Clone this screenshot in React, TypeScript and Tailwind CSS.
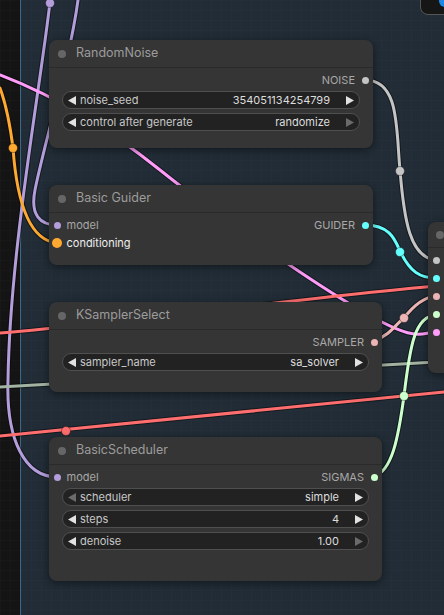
import React from "react";

type Dir = "l" | "r";

function Arrow({ dir, dim }: { dir: Dir; dim?: boolean }) {
  return (
    <svg width="8" height="9" viewBox="0 0 8 9" className="shrink-0">
      <polygon
        points={dir === "l" ? "8,0 8,9 0,4.5" : "0,0 0,9 8,4.5"}
        fill={dim ? "#6b6b6b" : "#e2e2e2"}
      />
    </svg>
  );
}

function Widget({
  label,
  value,
  dimLeft,
  dimRight,
}: {
  label: string;
  value: string;
  dimLeft?: boolean;
  dimRight?: boolean;
}) {
  return (
    <div className="mx-[13px] flex h-[18px] items-center rounded-full border border-[#4f4f4f] bg-[#222222] px-[5px] text-[11px]">
      <Arrow dir="l" dim={dimLeft} />
      <span className="ml-[4px] text-[#c8c8c8]">{label}</span>
      <span className="ml-auto mr-[16px] text-[#dddddd]">{value}</span>
      <Arrow dir="r" dim={dimRight} />
    </div>
  );
}

function InSlot({ label, dot, bright }: { label: string; dot: string; bright?: boolean }) {
  return (
    <div className="flex h-[18px] items-center">
      <span className="flex w-4 justify-center">
        <span className={`rounded-full ${dot}`} />
      </span>
      <span className={`ml-[1.5px] text-[11px] ${bright ? "text-[#eeeeee]" : "text-[#a8a8a8]"}`}>{label}</span>
    </div>
  );
}

function OutSlot({ label, dot }: { label: string; dot: string }) {
  return (
    <div className="ml-auto flex h-[18px] items-center">
      <span className="mr-[2px] text-[11px] text-[#a8a8a8]">{label}</span>
      <span className="flex w-4 justify-center">
        <span className={`rounded-full ${dot}`} />
      </span>
    </div>
  );
}

function Node({ pos, title, children }: { pos: string; title: string; children: React.ReactNode }) {
  return (
    <div className={`absolute ${pos} flex flex-col rounded-lg bg-[#353535] shadow-[0_2px_8px_rgba(0,0,0,0.45)]`}>
      <div className="flex h-[28px] shrink-0 items-center border-b border-[#2a2a2a] pl-[9px]">
        <span className="h-[8px] w-[8px] rounded-full bg-[#666666]" />
        <span className="ml-[10px] text-[12.5px] text-[#9c9c9c]">{title}</span>
      </div>
      <div className="flex flex-col pt-[3px]">{children}</div>
    </div>
  );
}

const wires: { d: string; color: string }[] = [
  { d: "M50,2 C40,90 10,250 8,380 C6,440 25,477 57,477", color: "#B39DDB" },
  { d: "M78,0 C70,60 45,140 35,190 C30,215 40,225 57,225", color: "#B39DDB" },
  { d: "M0,88 C8,110 12,140 13,148 C16,190 25,240 57,243", color: "#FFA931" },
  { d: "M0,75 C60,98 110,130 160,170 S300,275 360,310 S420,332 436,332", color: "#FF9CF9" },
  { d: "M0,333 C150,320 300,298 436,286", color: "#FF6E6E" },
  { d: "M0,436 L444,392", color: "#FF6E6E" },
  { d: "M0,387 L436,362", color: "#A3B3A3" },
  { d: "M365,80 C400,80 396,130 400,170 C404,220 410,258 436,260", color: "#C4C4C4" },
  { d: "M365,225 C390,225 395,240 400,251 C410,272 420,278 436,278", color: "#66FFFF" },
  { d: "M374,341 C390,335 395,325 404,318 C414,305 425,297 436,296", color: "#ECB4B4" },
  { d: "M374,477 C392,470 398,440 404,396 C410,345 415,316 436,315", color: "#CDFFCD" },
];

const dots: { x: number; y: number; color: string }[] = [
  { x: 50, y: 3, color: "#B39DDB" },
  { x: 13, y: 148, color: "#FFA931" },
  { x: 400, y: 171, color: "#C4C4C4" },
  { x: 400, y: 252, color: "#66FFFF" },
  { x: 404, y: 318, color: "#ECB4B4" },
  { x: 404, y: 396, color: "#CDFFCD" },
  { x: 66, y: 431, color: "#FF6E6E" },
];

export default function App() {
  return (
    <div className="relative flex h-[615px] w-[444px] overflow-hidden font-['Inter','Noto_Sans',sans-serif]">
      <div className="h-full w-[21px] shrink-0 border-r border-[#3d6587] bg-[#141414] bg-[linear-gradient(to_right,#181818_1px,transparent_1px),linear-gradient(to_bottom,#181818_1px,transparent_1px)] bg-size-[10px_10px]" />
      <div className="h-full flex-1 bg-[#212c36] bg-[linear-gradient(to_right,#242f39_1px,transparent_1px),linear-gradient(to_bottom,#242f39_1px,transparent_1px)] bg-size-[10px_10px]" />

      <svg className="absolute inset-0" width="444" height="615" viewBox="0 0 444 615" fill="none">
        {wires.map((w, i) => (
          <path key={`o${i}`} d={w.d} stroke="#000000" strokeOpacity="0.45" strokeWidth="5" strokeLinecap="round" />
        ))}
        {wires.map((w, i) => (
          <path key={`w${i}`} d={w.d} stroke={w.color} strokeWidth="3" strokeLinecap="round" />
        ))}
        {dots.map((p, i) => (
          <circle key={i} cx={p.x} cy={p.y} r="4.5" fill={p.color} stroke="#000000" strokeOpacity="0.35" strokeWidth="1" />
        ))}
      </svg>

      <Node pos="left-[49px] top-[40px] w-[324px] h-[108px]" title="RandomNoise">
        <OutSlot label="NOISE" dot="h-[7px] w-[7px] bg-[#c4c4c4]" />
        <div className="mt-[2px] flex flex-col gap-[4px]">
          <Widget label="noise_seed" value="354051134254799" />
          <Widget label="control after generate" value="randomize" dimRight />
        </div>
      </Node>

      <Node pos="left-[49px] top-[185px] w-[324px] h-[80px]" title="Basic Guider">
        <div className="flex">
          <InSlot label="model" dot="h-[7px] w-[7px] bg-[#B39DDB]" />
          <OutSlot label="GUIDER" dot="h-[7px] w-[7px] bg-[#66FFFF]" />
        </div>
        <InSlot label="conditioning" dot="h-[10px] w-[10px] bg-[#FFA931]" bright />
      </Node>

      <Node pos="left-[49px] top-[302px] w-[333px] h-[90px]" title="KSamplerSelect">
        <OutSlot label="SAMPLER" dot="h-[7px] w-[7px] bg-[#ECB4B4]" />
        <div className="mt-[2px] flex flex-col gap-[4px]">
          <Widget label="sampler_name" value="sa_solver" />
        </div>
      </Node>

      <Node pos="left-[49px] top-[437px] w-[333px] h-[144px]" title="BasicScheduler">
        <div className="flex">
          <InSlot label="model" dot="h-[7px] w-[7px] bg-[#B39DDB]" />
          <OutSlot label="SIGMAS" dot="h-[7px] w-[7px] bg-[#CDFFCD]" />
        </div>
        <div className="mt-[2px] flex flex-col gap-[4px]">
          <Widget label="scheduler" value="simple" dimLeft />
          <Widget label="steps" value="4" />
          <Widget label="denoise" value="1.00" dimRight />
        </div>
      </Node>

      <div className="absolute left-[428px] top-[222px] flex h-[151px] w-[40px] flex-col rounded-l-lg bg-[#353535] shadow-[0_2px_8px_rgba(0,0,0,0.45)]">
        <div className="flex h-[26px] shrink-0 items-center border-b border-[#2a2a2a] pl-[8px]">
          <span className="h-[8px] w-[8px] rounded-full bg-[#666666]" />
        </div>
        <div className="flex flex-col pt-[3px]">
          <InSlot label="" dot="h-[7px] w-[7px] bg-[#c4c4c4]" />
          <InSlot label="" dot="h-[7px] w-[7px] bg-[#66FFFF]" />
          <InSlot label="" dot="h-[7px] w-[7px] bg-[#ECB4B4]" />
          <InSlot label="" dot="h-[7px] w-[7px] bg-[#CDFFCD]" />
          <InSlot label="" dot="h-[7px] w-[7px] bg-[#FF9CF9]" />
        </div>
      </div>

      <div className="absolute left-[420px] top-[-20px] h-[35px] w-[40px] overflow-hidden rounded-bl-lg border border-[#555555] bg-[#161616]">
        <span className="absolute left-[18px] top-[14px] h-[12px] w-[12px] rounded-full bg-[#1e88e5]" />
      </div>
    </div>
  );
}
